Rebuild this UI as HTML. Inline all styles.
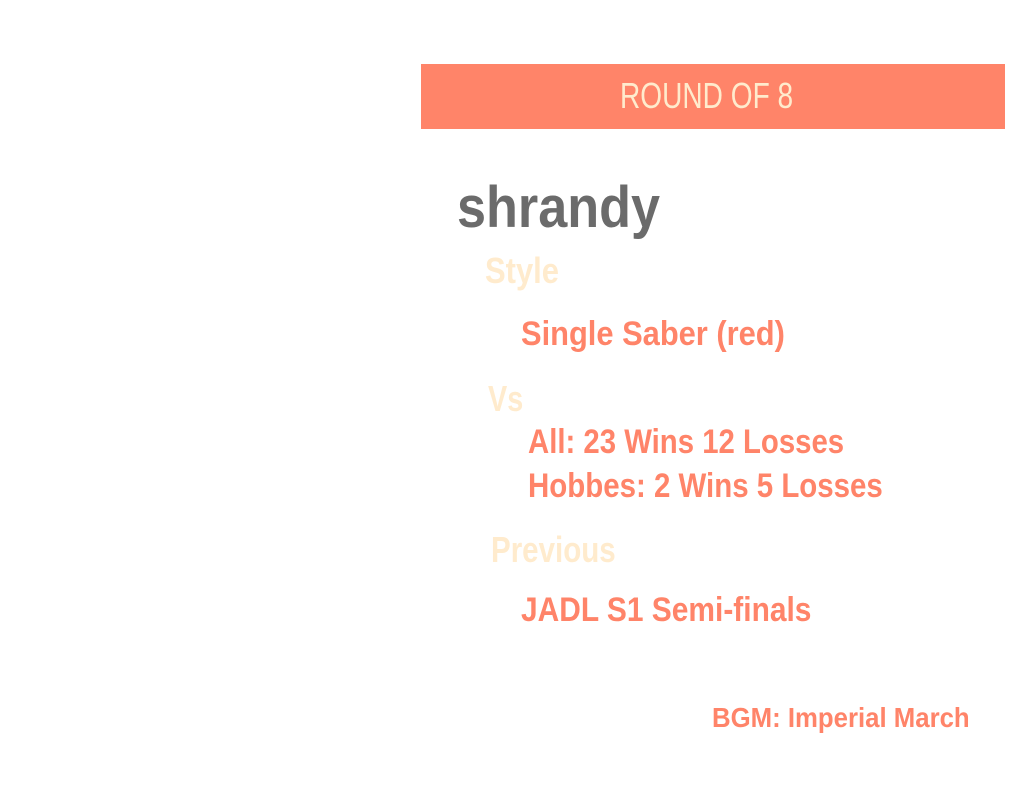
<!DOCTYPE html>
<html><head><meta charset="utf-8"><style>
html,body{margin:0;padding:0;background:#fff;width:1026px;height:800px;overflow:hidden}
body{position:relative;font-family:"Liberation Sans Narrow","Liberation Sans",sans-serif}
.t{position:absolute;line-height:1;white-space:nowrap;font-weight:bold;transform-origin:0 0}
.bar{position:absolute;left:421px;top:64px;width:584px;height:65px;background:#ff8469}
.o{color:#ff8469}.c{color:#ffebcd}
</style></head><body>
<div class="bar"></div>
<div class="t" style="left:620px;top:78px;font-size:36px;font-weight:normal;color:#ffebcd;transform:scaleX(0.78)">ROUND OF 8</div>
<div class="t" style="left:457px;top:179px;font-size:58px;color:#6b6b6b;transform:scaleX(0.9)">shrandy</div>
<div class="t c" style="left:485px;top:253px;font-size:36px;transform:scaleX(0.86)">Style</div>
<div class="t o" style="left:521px;top:317px;font-size:34px;transform:scaleX(0.907)">Single Saber (red)</div>
<div class="t c" style="left:488px;top:381px;font-size:36px;transform:scaleX(0.8)">Vs</div>
<div class="t o" style="left:528px;top:425px;font-size:34px;transform:scaleX(0.863)">All: 23 Wins 12 Losses</div>
<div class="t o" style="left:528px;top:469px;font-size:34px;transform:scaleX(0.866)">Hobbes: 2 Wins 5 Losses</div>
<div class="t c" style="left:491px;top:532px;font-size:36px;transform:scaleX(0.82)">Previous</div>
<div class="t o" style="left:521px;top:593px;font-size:34px;transform:scaleX(0.88)">JADL S1 Semi-finals</div>
<div class="t o" style="left:712px;top:704px;font-size:28px;transform:scaleX(0.92)">BGM: Imperial March</div>
</body></html>
